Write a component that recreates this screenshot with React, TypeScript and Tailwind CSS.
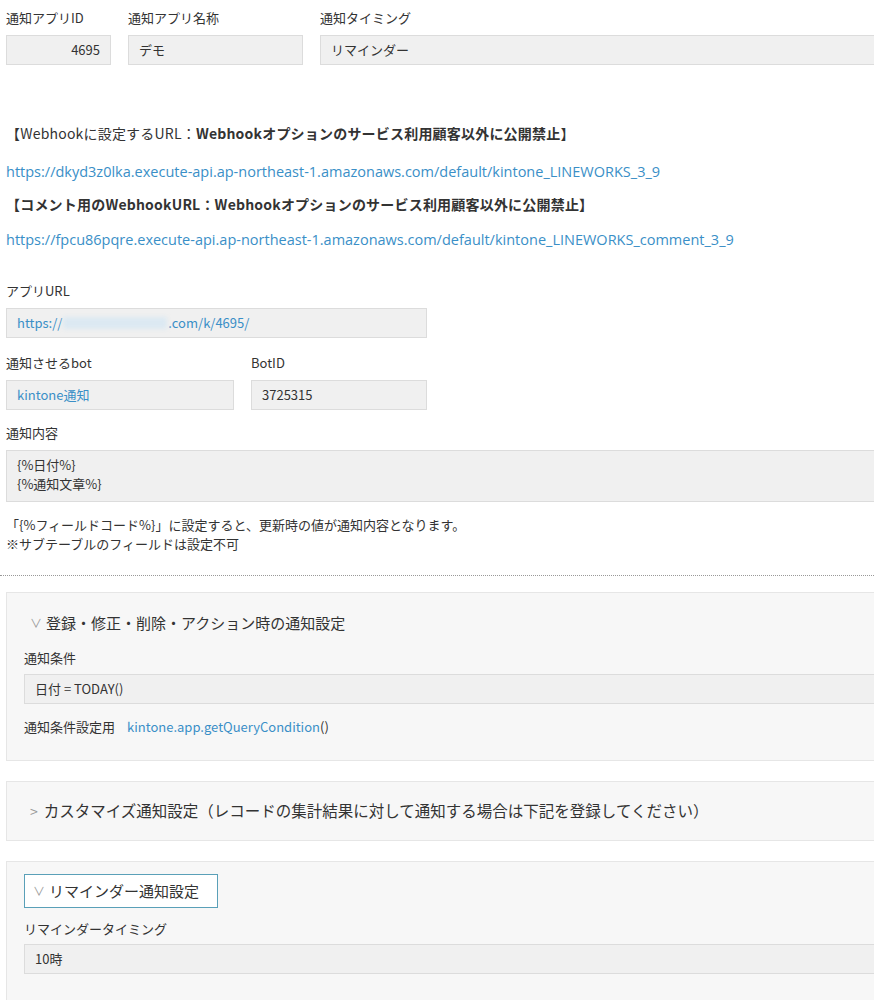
const box = "h-[30px] flex items-center px-2.5 bg-[#f0f0f0] border border-[#dcdcdc] text-[13px]";
const link = "text-[#3a8fc7]";

export default function App() {
  return (
    <div
      className="w-[874px] min-h-[1000px] bg-white text-[#333] text-[13px] overflow-hidden"
      style={{ fontFamily: '"Noto Sans CJK JP", "Open Sans", sans-serif' }}
    >
      <div className="flex pl-[6px] pt-[7px] gap-[17px]">
        <div className="w-[105px]">
          <div className="h-[28px] leading-[22px]">通知アプリID</div>
          <div className={box + " justify-end"}>4695</div>
        </div>
        <div className="w-[175px]">
          <div className="h-[28px] leading-[22px]">通知アプリ名称</div>
          <div className={box}>デモ</div>
        </div>
        <div className="flex-1 -mr-4">
          <div className="h-[28px] leading-[22px]">通知タイミング</div>
          <div className={box}>リマインダー</div>
        </div>
      </div>

      <div className="mt-[58px] pl-[6px] text-[14px]">
        <div className="h-[20px] tracking-[0.2px]">【Webhookに設定するURL：<b>Webhookオプションのサービス利用顧客以外に公開禁止</b>】</div>
        <div className={"mt-[18px] h-[20px] text-[14.5px] " + link} style={{ fontFamily: '"Open Sans", sans-serif' }}>https://dkyd3z0lka.execute-api.ap-northeast-1.amazonaws.com/default/kintone_LINEWORKS_3_9</div>
        <div className="mt-[13px] h-[20px] font-bold tracking-[0.2px]">【コメント用のWebhookURL：Webhookオプションのサービス利用顧客以外に公開禁止】</div>
        <div className={"mt-[15px] h-[20px] text-[14.5px] " + link} style={{ fontFamily: '"Open Sans", sans-serif' }}>https://fpcu86pqre.execute-api.ap-northeast-1.amazonaws.com/default/kintone_LINEWORKS_comment_3_9</div>
      </div>

      <div className="pl-[6px] mt-[31px]">
        <div className="h-[28px] leading-[22px]">アプリURL</div>
        <div className={box + " w-[421px] " + link}>
          https://<span className="inline-block w-[104px] h-[12px] bg-[#dce9f2] blur-[2px] mx-px" />.com/k/4695/
        </div>
        <div className="flex gap-[17px] mt-[14px]">
          <div className="w-[228px]">
            <div className="h-[28px] leading-[22px]">通知させるbot</div>
            <div className={box + " " + link}>kintone通知</div>
          </div>
          <div className="w-[176px]">
            <div className="h-[28px] leading-[22px]">BotID</div>
            <div className={box}>3725315</div>
          </div>
        </div>
        <div className="h-[28px] leading-[22px] mt-[12px]">通知内容</div>
        <div className="bg-[#f0f0f0] border border-[#dcdcdc] h-[52px] px-2.5 pt-[4px] leading-[19px] -mr-2">
          <div>{"{%日付%}"}</div>
          <div>{"{%通知文章%}"}</div>
        </div>
        <div className="mt-[13px] leading-[19px]">
          <div>「{"{%フィールドコード%}"}」に設定すると、更新時の値が通知内容となります。</div>
          <div>※サブテーブルのフィールドは設定不可</div>
        </div>
      </div>

      <div className="mt-[22px] border-t border-dotted border-[#999]" />

      <div className="ml-[6px] -mr-2 mt-[16px] bg-[#f7f7f7] border border-[#e6e6e6] h-[169px] px-[17px] pt-[18px]">
        <div className="text-[15px] h-[24px] flex items-center pl-[6px]">
          <span className="text-[#999] mr-1 text-[12px]">∨</span>登録・修正・削除・アクション時の通知設定
        </div>
        <div className="mt-[13px] h-[26px]">通知条件</div>
        <div className={box + " -mr-4"}>日付 = TODAY()</div>
        <div className="mt-[13px]">
          通知条件設定用<span className={"ml-3 " + link}>kintone.app.getQueryCondition</span>()
        </div>
      </div>

      <div className="ml-[6px] -mr-2 mt-[20px] bg-[#f7f7f7] border border-[#e6e6e6] h-[60px] px-[23px] flex items-center text-[15.5px]">
        <span className="text-[#999] mr-1.5 text-[14px]">&gt;</span>カスタマイズ通知設定（レコードの集計結果に対して通知する場合は下記を登録してください）
      </div>

      <div className="ml-[6px] -mr-2 mt-[20px] bg-[#f7f7f7] border border-[#e6e6e6] h-[140px] px-[17px] pt-[12px]">
        <div className="w-[194px] h-[34px] border border-[#5aa0b8] bg-white text-[15px] flex items-center pl-2">
          <span className="text-[#999] mr-1 text-[12px]">∨</span>リマインダー通知設定
        </div>
        <div className="mt-[10px] h-[26px] leading-[22px]">リマインダータイミング</div>
        <div className={box + " -mr-4"}>10時</div>
      </div>
    </div>
  );
}
